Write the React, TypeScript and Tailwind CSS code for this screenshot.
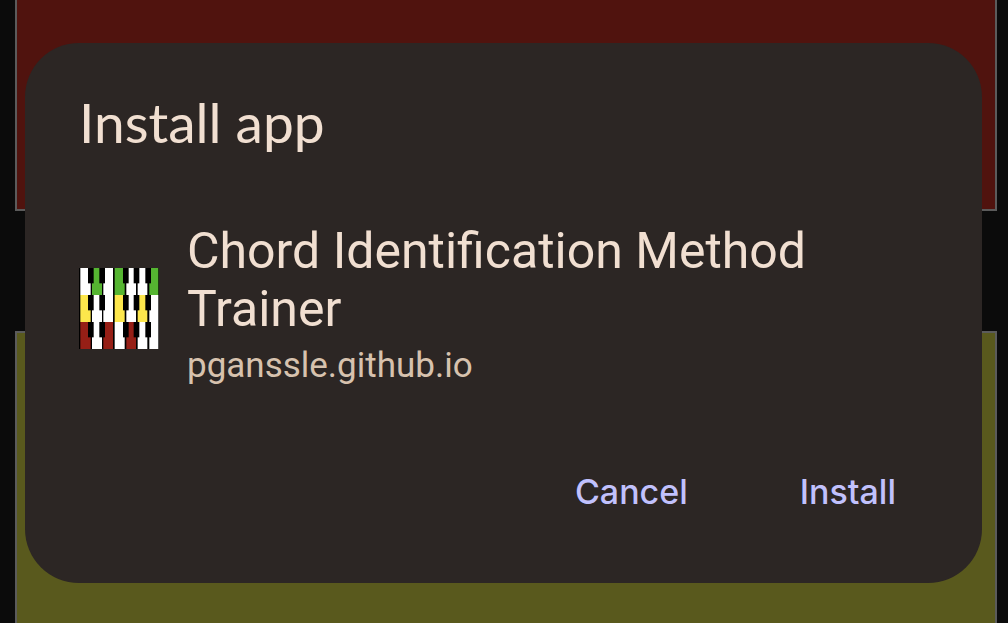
const WHITE = "#ffffff";
const GREEN = "#55b531";
const YELLOW = "#fde74c";
const RED = "#961f16";

const octaves = [
  [WHITE, GREEN, WHITE, GREEN, WHITE, WHITE, GREEN],
  [YELLOW, WHITE, WHITE, YELLOW, WHITE, YELLOW, WHITE],
  [RED, WHITE, RED, WHITE, RED, WHITE, WHITE],
];
const whiteKeys = [
  [4, 31],
  [39, 30],
  [73, 29],
  [107, 30],
  [142, 29],
  [176, 29],
  [211, 27],
];
const blackKeys = [27, 61, 132, 164, 199];

function AppIcon() {
  return (
    <svg viewBox="0 0 240 243" className="h-[81px] w-20 shrink-0" role="img" aria-label="App icon">
      <rect width="240" height="243" fill="#000" />
      {octaves.map((colors, row) => (
        <g key={row} transform={`translate(0 ${row * 81})`}>
          {whiteKeys.map(([x, width], i) => (
            <rect key={x} x={x} width={width} height="81" fill={colors[i]} />
          ))}
          {blackKeys.map((x) => (
            <rect key={x} x={x} width="17" height="46" fill="#000" />
          ))}
        </g>
      ))}
    </svg>
  );
}

export default function App() {
  return (
    <div className="relative h-screen overflow-hidden bg-[#0b0b0b] font-['Roboto',sans-serif]">
      <div className="flex h-full flex-col gap-[120px] pr-[11px] pl-[15px]">
        <div className="h-[211px] shrink-0 border-2 border-t-0 border-[#5b5b5b] bg-[#50130e]" />
        <div className="grow border-2 border-b-0 border-[#5b5b5b] bg-[#59591d]" />
      </div>
      <div className="absolute inset-0 flex items-start pt-[43px] pr-[26px] pl-[25px]">
        <section
          role="dialog"
          aria-labelledby="dialog-title"
          className="w-full rounded-[54px] bg-[#2c2624] px-[54px] pt-[46px] pb-[54px] text-[#f1dfd1]"
        >
          <h1 id="dialog-title" className="font-['Lato',sans-serif] text-[55px] leading-[66px]">
            Install app
          </h1>
          <div className="mt-[67px] flex items-center gap-7">
            <AppIcon />
            <div className="min-w-0">
              <p className="text-[50px] leading-[58px]">Chord Identification Method Trainer</p>
              <p className="text-[35px] leading-[56px] text-[#d7c2ae]">pganssle.github.io</p>
            </div>
          </div>
          <div className="mt-[60px] flex justify-end gap-12 font-['Inter',sans-serif] text-[34px] leading-[51px] font-medium text-[#c1c1fd]">
            <button type="button" className="px-8 py-3">
              Cancel
            </button>
            <button type="button" className="px-8 py-3">
              Install
            </button>
          </div>
        </section>
      </div>
    </div>
  );
}
